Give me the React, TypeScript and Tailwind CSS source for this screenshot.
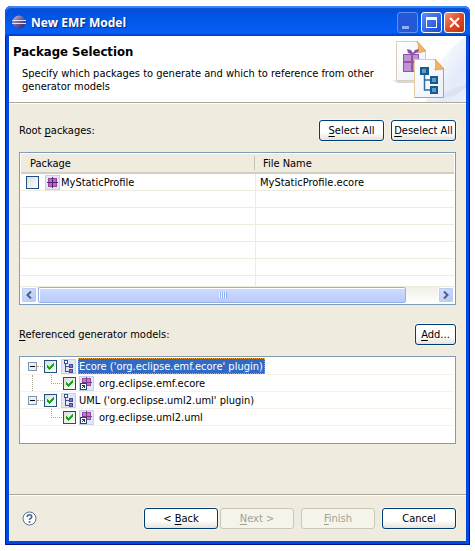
import type { ReactNode } from "react";

const BUTTON =
  "h-[21px] rounded-[3px] border border-[#003c74] bg-linear-to-b from-white from-60% to-[#e6e3da] text-center leading-[19px] text-black shadow-[0_0_0_1px_#f6f4ec] disabled:border-[#c9c7ba] disabled:bg-[#f5f4ea] disabled:bg-none disabled:text-[#a1a192] disabled:shadow-none";

function Tick({ id, label, checked }: { id: string; label: string; checked?: boolean }) {
  return (
    <span className="relative block size-[13px] shrink-0">
      <input
        id={id}
        type="checkbox"
        aria-label={label}
        defaultChecked={checked}
        className="peer block size-[13px] appearance-none border border-[#1c5180] bg-linear-to-br from-[#dcdcd7] to-white"
      />
      <svg
        viewBox="0 0 13 13"
        className="pointer-events-none absolute inset-0 hidden size-[13px] peer-checked:block"
        shapeRendering="crispEdges"
      >
        <path
          d="M3 5h1v3h-1zM4 6h1v3h-1zM5 7h1v3h-1zM6 6h1v3h-1zM7 5h1v3h-1zM8 4h1v3h-1zM9 3h1v3h-1z"
          fill="#21a121"
        />
      </svg>
    </span>
  );
}

function PackageIcon({ shortcut }: { shortcut?: boolean }) {
  return (
    <svg viewBox="0 0 15 15" className="size-[15px] shrink-0" shapeRendering="crispEdges">
      <rect x="0" y="0" width="15" height="15" rx="1" fill="#c6d0e8" />
      <rect x="1" y="1" width="13" height="13" fill="#e2e7f5" />
      {shortcut ? (
        <>
          <path d="M3 2h9v8h-9z" fill="#9a48ac" />
          <path d="M4 3h3v3h-3zM8 3h3v3h-3zM8 7h3v2h-3z" fill="#bd7ac8" />
          <path d="M7 1h1v9h-1zM3 6h10v1h-10z" fill="#7a3a90" />
          <rect x="1" y="7" width="7" height="7" fill="#2c4468" />
          <rect x="2" y="8" width="5" height="5" fill="#fff" />
          <path d="M3 9h3v1h-3zM5 9h1v3h-1zM4 10h1v1h-1zM3 11h1v1h-1z" fill="#1f3a5f" />
        </>
      ) : (
        <>
          <path d="M3 3h9v9h-9z" fill="#9440a6" />
          <path d="M4 4h3v3h-3zM8 4h3v3h-3zM4 8h3v3h-3zM8 8h3v3h-3z" fill="#b46ac2" />
          <path d="M7 2h1v11h-1zM2 7h11v1h-11z" fill="#4f2468" />
        </>
      )}
    </svg>
  );
}

function ModelIcon() {
  return (
    <svg viewBox="0 0 15 15" className="size-[15px] shrink-0" shapeRendering="crispEdges">
      <rect width="15" height="15" fill="#c6d0e8" />
      <rect x="1" y="1" width="13" height="13" fill="#e2e7f5" />
      <path d="M3 1h4v4h-4zM8 5h4v4h-4zM8 10h4v4h-4z" fill="#3a4e94" />
      <path d="M4 2h2v2h-2z" fill="#fff" />
      <path d="M9 6h2v2h-2zM9 11h2v2h-2z" fill="#9a6ac4" />
      <path d="M4 5h1v8h-1zM5 7h3v1h-3zM5 12h3v1h-3z" fill="#3a4e94" />
    </svg>
  );
}

function WizardBanner() {
  return (
    <svg viewBox="0 0 76 66" className="h-[66px] w-[76px] shrink-0">
      <defs>
        <linearGradient id="sky" x1="0" y1="0" x2="1" y2="1">
          <stop offset="0.2" stopColor="#fff" />
          <stop offset="0.7" stopColor="#e4eafa" />
          <stop offset="1" stopColor="#eef1fc" />
        </linearGradient>
        <linearGradient id="sheet" x1="0" y1="0" x2="1" y2="1">
          <stop offset="0" stopColor="#fff" />
          <stop offset="1" stopColor="#e9effa" />
        </linearGradient>
      </defs>
      <path d="M76 0v66H36C40 36 54 16 76 0z" fill="url(#sky)" />
      <path d="M2 44l6 1h22v2H8z" fill="#d5d8e4" />
      <path d="M54 58l12-6 10-4v4l-12 8-10 2z" fill="#dde2f0" />
      <path d="M6.500 5.500h20l9 9v30h-29z" fill="url(#sheet)" stroke="#d9cfb6" />
      <path d="M27 5l9 10-9 2c2-5 2-8 0-12z" fill="#f3b565" stroke="#d99445" strokeWidth="0.700" />
      <path d="M13 18h16v18h-16z" fill="#8f55aa" />
      <path d="M14 19h7v6h-7zM23 19h5v6h-5zM14 27h7v8h-7zM23 27h5v8h-5z" fill="#c094d2" />
      <path d="M21 18l-3-1-1-4 4 1 2 3 2-3 4-1-1 3-4 2z" fill="#8b4fa8" />
      <path d="M24.500 23.500h20l9 9v29h-29z" fill="url(#sheet)" stroke="#9ba6b4" />
      <path d="M24.500 61.500v-38h20" fill="none" stroke="#e5cc98" />
      <path d="M45 23l9 10-9 1c1-4 1-8 0-11z" fill="#f3b565" stroke="#d99445" strokeWidth="0.700" />
      <path d="M34.500 38v16h8M34.500 44h8" fill="none" stroke="#2e6c9b" strokeWidth="1.500" />
      <path d="M30 31h9v8h-9zM40 40h8v8h-8zM40 50h8v8h-8z" fill="#175a8d" />
      <path d="M32 33h4v4h-4zM42 42h4v4h-4zM42 52h4v4h-4z" fill="#5c9dc6" />
    </svg>
  );
}

function TitleBar() {
  const control = "mt-[3px] grid size-[21px] place-items-center rounded-[3px] border";
  return (
    <header className="flex h-[30px] items-center gap-[2px] rounded-t-[6px] bg-linear-to-b from-[#0a4ad0] via-[#0054e3] via-30% to-[#0660fa] pr-[5px] pl-[7px] shadow-[inset_0_2px_1px_#3d8af7,inset_0_-2px_1px_#0145cb]">
      <svg viewBox="0 0 14 14" className="mt-[2px] size-[14px]">
        <defs>
          <linearGradient id="orb" x1="0" y1="0" x2="1" y2="1">
            <stop offset="0" stopColor="#d5bfcc" />
            <stop offset="0.500" stopColor="#6a5c98" />
            <stop offset="1" stopColor="#251c60" />
          </linearGradient>
        </defs>
        <circle cx="7" cy="7" r="6.500" fill="url(#orb)" />
        <path d="M0 5.500h14M0 8.500h14" stroke="#dfe0f4" strokeWidth="1" />
      </svg>
      <h1 className="ml-[3px] grow pt-[3px] font-['Open_Sans','Noto_Sans',sans-serif] text-[12px] leading-4 font-bold text-white [text-shadow:1px_1px_1px_#0a2a80]">
        New EMF Model
      </h1>
      <button type="button" aria-label="Minimize" disabled className={control + " border-[#5f92f0] bg-[#2458d8]"}>
        <svg viewBox="0 0 19 19" className="size-[19px]" shapeRendering="crispEdges">
          <path d="M4 13h7v3h-7z" fill="#8fb0f4" />
        </svg>
      </button>
      <button type="button" aria-label="Maximize" className={control + " ml-[1px] border-white bg-linear-to-br from-[#5c8cf5] to-[#1748d0]"}>
        <svg viewBox="0 0 19 19" className="size-[19px]" shapeRendering="crispEdges">
          <path d="M4 4h11v11h-11zM5 7v7h9v-7z" fill="#fff" fillRule="evenodd" />
        </svg>
      </button>
      <button type="button" aria-label="Close" className={control + " border-white bg-linear-to-br from-[#f0916f] via-[#de4a25] to-[#c0300c]"}>
        <svg viewBox="0 0 19 19" className="size-[19px]">
          <path d="M5 5l9 9M14 5l-9 9" stroke="#fff" strokeWidth="2" />
        </svg>
      </button>
    </header>
  );
}

function ScrollBar() {
  const end =
    "grid w-4 shrink-0 place-items-center rounded-[2px] border border-white bg-linear-to-br from-[#d7e2fe] to-[#b4c8f6] shadow-[inset_0_0_0_1px_#b9ccf5]";
  return (
    <div className="flex h-4 bg-linear-to-b from-[#f0efe6] to-white">
      <button type="button" aria-label="Scroll left" className={end}>
        <svg viewBox="0 0 8 8" className="size-2">
          <path d="M6 0.500L2.500 4L6 7.500" fill="none" stroke="#4d6185" strokeWidth="2" />
        </svg>
      </button>
      <div className="flex grow pl-[1px]">
        <div className="flex w-[92%] items-center justify-center gap-[1px] rounded-[2px] border border-[#98b0e8] bg-linear-to-b from-[#cfdcfe] to-[#b9cbfa] shadow-[inset_1px_1px_0_#fff]">
          {[0, 1, 2, 3].map((n) => (
            <span key={n} className="h-[6px] w-[1px] bg-[#eef4fe] shadow-[1px_0_0_#8cb0f8]" />
          ))}
        </div>
      </div>
      <button type="button" aria-label="Scroll right" className={end}>
        <svg viewBox="0 0 8 8" className="size-2">
          <path d="M2 0.500L5.500 4L2 7.500" fill="none" stroke="#4d6185" strokeWidth="2" />
        </svg>
      </button>
    </div>
  );
}

function PackageTable() {
  const cell = "h-[17px] border-b border-[#efebde] p-0";
  return (
    <div className="mt-[11px] border border-[#7f9db9] bg-white p-[1px]">
      <table className="w-full table-fixed border-separate border-spacing-0 text-left leading-4">
        <thead>
          <tr className="bg-[#efebde]">
            <th className="h-5 w-[235px] border-b-2 border-[#d2cebf] p-0 font-normal">
              <span className="mr-[1px] flex h-[14px] items-center border-r border-[#c7c5b2] pt-[2px] pl-[9px]">
                Package
              </span>
            </th>
            <th className="border-b-2 border-[#d2cebf] p-0 font-normal">
              <span className="flex h-[14px] items-center pt-[2px] pl-[7px]">File Name</span>
            </th>
          </tr>
        </thead>
        <tbody>
          <tr>
            <td className={cell + " border-r"}>
              <span className="flex h-4 items-center pl-[5px]">
                <Tick id="static" label="MyStaticProfile" />
                <span className="ml-[6px] flex">
                  <PackageIcon />
                </span>
                <label htmlFor="static" className="ml-[1px] pt-[2px] leading-[14px]">
                  MyStaticProfile
                </label>
              </span>
            </td>
            <td className={cell}>
              <span className="block pt-[2px] pl-1 leading-[14px]">MyStaticProfile.ecore</span>
            </td>
          </tr>
          {[0, 1, 2, 3, 4].map((n) => (
            <tr key={n}>
              <td className={cell + " border-r"} />
              <td className={cell} />
            </tr>
          ))}
          <tr>
            <td className="h-[11px] border-r border-b border-[#efebde] p-0" />
            <td className="h-[11px] border-b border-[#efebde] p-0" />
          </tr>
        </tbody>
      </table>
      <ScrollBar />
    </div>
  );
}

function Expander() {
  return (
    <button type="button" aria-label="Collapse" className="block size-[9px] shrink-0">
      <svg viewBox="0 0 9 9" className="size-[9px]" shapeRendering="crispEdges">
        <rect width="9" height="9" rx="1" fill="#7b97b4" />
        <rect x="1" y="1" width="7" height="7" fill="#f2efe8" />
        <path d="M2 4h5v1h-5z" fill="#000" />
      </svg>
    </button>
  );
}

function Branch({
  id,
  label,
  child,
  selected,
  last,
}: {
  id: string;
  label: string;
  child: string;
  selected?: boolean;
  last?: boolean;
}) {
  return (
    <li>
      <div className="flex h-[17px] items-center border-b border-[#fbf0e8] pl-[7px]">
        <Expander />
        <span className="mr-[1px] w-[6px] border-t border-dotted border-[#aca899]" />
        <Tick id={id} label={label} checked />
        <span className="ml-1 flex">
          <ModelIcon />
        </span>
        <label
          htmlFor={id}
          className={
            selected
              ? "ml-[2px] h-4 border border-dotted border-[#f0a020] bg-[#316ac5] pt-[1px] pr-[1px] leading-[14px] text-white"
              : "ml-[3px] pt-[2px] leading-[14px]"
          }
        >
          {label}
        </label>
      </div>
      <ul>
        <li className="flex h-[17px] border-b border-[#fbf0e8] pl-[11px]">
          <span className={last ? "w-[1px]" : "w-[1px] border-l border-dotted border-[#aca899]"} />
          <span className="ml-[18px] h-[9px] w-[11px] border-b border-l border-dotted border-[#aca899]" />
          <span className="ml-[1px] flex items-center">
            <Tick id={id + "-child"} label={child} checked />
            <span className="ml-[3px] flex">
              <PackageIcon shortcut />
            </span>
            <label htmlFor={id + "-child"} className="ml-[5px] pt-[2px] leading-[14px]">
              {child}
            </label>
          </span>
        </li>
      </ul>
    </li>
  );
}

function Key({ children }: { children: ReactNode }) {
  return <span className="underline underline-offset-2">{children}</span>;
}

export default function App() {
  return (
    <div className="bg-white px-[5px] pt-[6px] pb-[6px] font-['DejaVu_Sans_Condensed','DejaVu_Sans',sans-serif] text-[11px] text-black">
      <main className="rounded-t-[6px] bg-[#0048e0] shadow-[inset_1px_0_0_#0019cf,inset_-1px_-1px_0_#00138c]">
        <TitleBar />
        <div className="mx-1 bg-[#efebde]">
          <section className="flex h-[67px] border-b border-[#aca899] bg-white">
            <div className="grow pt-2 pl-[4px]">
              <h2 className="text-[13px] leading-4 font-bold">Package Selection</h2>
              <p className="mt-[7px] pl-[9px] leading-[13px]">
                Specify which packages to generate and which to reference from other generator models
              </p>
            </div>
            <WizardBanner />
          </section>

          <section className="border-t border-white px-[10px] pt-4">
            <div className="flex h-[21px] items-center gap-[7px]">
              <h3 className="grow pt-[2px]">
                Root <Key>p</Key>ackages:
              </h3>
              <button type="button" className={BUTTON + " w-[65px]"}>
                <Key>S</Key>elect All
              </button>
              <button type="button" className={BUTTON + " w-[65px]"}>
                <Key>D</Key>eselect All
              </button>
            </div>
            <PackageTable />
            <div className="mt-[19px] flex h-[21px] items-center">
              <h3 className="grow pt-[2px]">
                <Key>R</Key>eferenced generator models:
              </h3>
              <button type="button" className={BUTTON + " w-[41px]"}>
                <Key>A</Key>dd...
              </button>
            </div>
            <ul className="mt-[11px] h-[88px] border border-[#7f9db9] bg-white p-[1px]">
              <Branch id="ecore" label="Ecore ('org.eclipse.emf.ecore' plugin)" child="org.eclipse.emf.ecore" selected />
              <Branch id="uml" label="UML ('org.eclipse.uml2.uml' plugin)" child="org.eclipse.uml2.uml" last />
            </ul>
          </section>

          <footer className="mt-[50px] flex h-[47px] items-center border-t border-[#aca899] px-[10px] shadow-[inset_0_1px_0_#fff]">
            <button type="button" aria-label="Help" className="ml-[3px] block">
              <svg viewBox="0 0 15 15" className="size-[15px]">
                <circle cx="7.500" cy="7.500" r="6.500" fill="#fff" stroke="#5a7096" />
                <path d="M5.300 6q0-2.200 2.200-2.200t2.200 1.900q0 1-1.100 1.700t-1 1.500" fill="none" stroke="#45608c" strokeWidth="1.600" />
                <path d="M6.700 10h1.700v1.700h-1.700z" fill="#45608c" />
              </svg>
            </button>
            <div className="flex grow justify-end">
              <button type="button" className={BUTTON + " w-[74px]"}>
                &lt; <Key>B</Key>ack
              </button>
              <button type="button" disabled className={BUTTON + " ml-[2px] w-[74px]"}>
                <Key>N</Key>ext &gt;
              </button>
              <button type="button" disabled className={BUTTON + " ml-[7px] w-[74px]"}>
                <Key>F</Key>inish
              </button>
              <button type="button" className={BUTTON + " ml-[7px] w-[74px]"}>
                Cancel
              </button>
            </div>
          </footer>
        </div>
        <div className="h-[4px]" />
      </main>
    </div>
  );
}
